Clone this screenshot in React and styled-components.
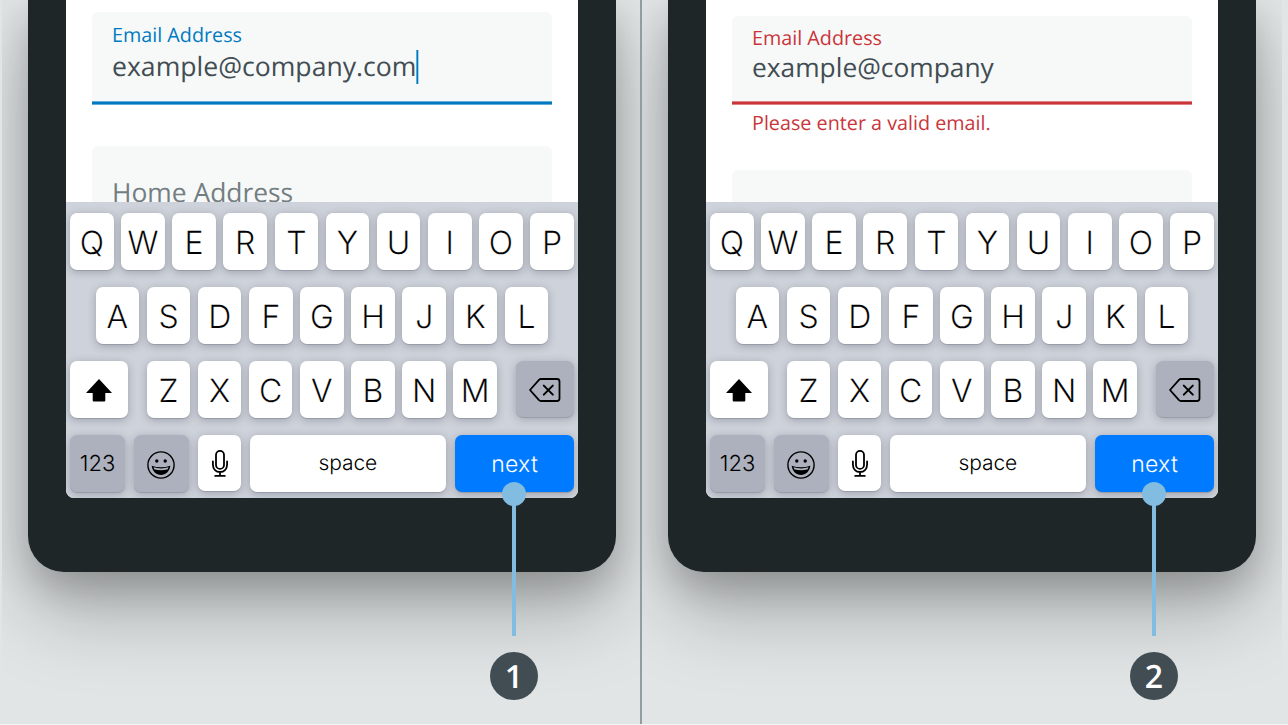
import React from "react";
import styled, { createGlobalStyle, css } from "styled-components";

const GlobalStyle = createGlobalStyle`
  *, *::before, *::after { box-sizing: border-box; }
  html, body { margin: 0; height: 100%; background: #e1e5e5; }
  body { overflow: hidden; font-family: "Open Sans", "Noto Sans", sans-serif; text-rendering: geometricPrecision; }
`;

const Page = styled.main`
  display: flex;
  width: 1288px;
  height: 725px;
  padding-left: 2px;
  background: #e1e5e5;
  border-bottom: 1px solid #f3f5f5;
`;

const Panel = styled.section`
  position: relative;
  flex: none;
  width: 640px;
  height: 724px;
  padding-left: 26px;
  overflow: hidden;
  border-right: ${(p) => (p.$divided ? "2px solid #929da2" : "none")};
`;

const Phone = styled.div`
  width: 588px;
  height: 572px;
  padding: 0 38px 74px;
  background: #1f2628;
  border-radius: 0 0 36px 36px;
  box-shadow: 0 40px 80px rgba(0, 0, 0, 0.25), 0 16px 36px rgba(0, 0, 0, 0.18);
`;

const Screen = styled.div`
  display: flex;
  flex-direction: column;
  height: 498px;
  overflow: hidden;
  background: #fff;
  border-radius: 0 0 8px 8px;
`;

const Form = styled.div`
  flex: none;
  height: 202px;
  padding: ${(p) => p.$top}px 26px 0;
  overflow: hidden;
`;

const Field = styled.div`
  height: ${(p) => p.$height}px;
  margin-top: ${(p) => p.$space || 0}px;
  padding: ${(p) => p.$pad}px 20px 0;
  border-radius: 6px 6px 0 0;
  background: #f7f9f8;
  color: ${(p) => p.$tone};
  ${(p) =>
    p.$underlined &&
    css`
      background: linear-gradient(currentColor, currentColor) 0 calc(100% - 1px) / 100% 2px no-repeat,
        linear-gradient(color-mix(in srgb, currentColor 62%, #fff), color-mix(in srgb, currentColor 62%, #fff)) 0 100% /
          100% 4px no-repeat,
        #f7f9f8;
    `}
`;

const Label = styled.div`
  font-size: 19.75px;
  line-height: 26px;
  white-space: nowrap;
`;

const Value = styled.div`
  display: flex;
  align-items: center;
  height: 34px;
  margin-top: ${(p) => p.$gap}px;
  color: #424d53;
  font-size: ${(p) => p.$size}px;
  line-height: 34px;
  white-space: nowrap;
`;

const Text = styled.span`
  position: relative;
  top: -1px;
`;

const Caret = styled.span`
  width: 3px;
  height: 34px;
  margin-left: -0.6px;
  background: linear-gradient(90deg, #5aaad8 1px, #0079c1 1px 2px, #a9d4ea 2px);
`;

const Placeholder = styled.div`
  color: #737e83;
  font-size: 26.4px;
  line-height: 34px;
  white-space: nowrap;
`;

const ErrorText = styled.div`
  height: 65px;
  padding: 5px 20px 0;
  color: #ca353b;
  font-size: 19.75px;
  line-height: 26px;
  white-space: nowrap;
`;

const Keyboard = styled.div`
  display: flex;
  flex: 1;
  flex-direction: column;
  gap: 16px;
  padding: 11px 4px 0;
  background: #ced2da;
`;

const KeyRow = styled.div`
  display: flex;
  height: 58px;
  gap: ${(p) => p.$gap || 7.6}px;
  padding-left: ${(p) => p.$indent || 0}px;
`;

const Key = styled.div`
  display: flex;
  flex: none;
  align-items: center;
  justify-content: center;
  width: ${(p) => p.$width || 43.56}px;
  height: ${(p) => p.$height || 57.3}px;
  margin-left: ${(p) => p.$before || 0}px;
  margin-right: ${(p) => p.$after || 0}px;
  border-radius: 7px;
  background: ${(p) => (p.$kind === "muted" ? "#adb1bd" : p.$kind === "primary" ? "#007aff" : "#fff")};
  color: ${(p) => (p.$kind === "primary" ? "#fff" : "#000")};
  box-shadow: 0 1px 0 rgba(120, 125, 140, 0.4), 0 2px 8px rgba(50, 55, 75, 0.32);
  font-family: Inter, "Liberation Sans", sans-serif;
  font-size: ${(p) => p.$size || 32}px;
  font-weight: ${(p) => (p.$size ? 350 : 300)};
  -webkit-text-stroke: ${(p) => (p.$size ? "0" : "0.15px #fff")};
  letter-spacing: ${(p) => p.$track || 0}px;
  line-height: 40px;
  padding-top: ${(p) => p.$drop ?? 2}px;
`;

const Callout = styled.div`
  position: absolute;
  top: 482px;
  left: 488px;
  display: flex;
  flex-direction: column;
  align-items: center;
  width: 48px;
`;

const Dot = styled.span`
  width: 24px;
  height: 24px;
  border-radius: 50%;
  background: #82bce0;
`;

const Stem = styled.span`
  width: 4px;
  height: 131px;
  margin-top: -1px;
  background: #82bce0;
`;

const Badge = styled.span`
  display: flex;
  align-items: center;
  justify-content: center;
  width: 48px;
  height: 48px;
  margin-top: 16px;
  padding-top: 2px;
  border-radius: 50%;
  background: #424d53;
  color: #fff;
  font-size: 32px;
  font-weight: 600;
  line-height: 46px;
`;

const ShiftIcon = () => (
  <svg width="26" height="23" viewBox="0 0 26 23">
    <path d="M13 0 26 14H19.3V21.5Q19.3 22.6 18.2 22.6H7.8Q6.7 22.6 6.7 21.5V14H0Z" />
  </svg>
);

const DeleteIcon = () => (
  <svg width="32" height="24" viewBox="0 0 32 24" fill="none" stroke="#000" strokeWidth="1.8" strokeLinecap="round" strokeLinejoin="round">
    <path d="M11.8 1H28Q30.5 1 30.5 3.5V20.5Q30.5 23 28 23H11.8Q10.8 23 10 22.2L1 12L10 1.8Q10.8 1 11.8 1Z" />
    <path d="m14.8 7.6 9 9m0-9-9 9" strokeWidth="2" />
  </svg>
);

const EmojiIcon = () => (
  <svg width="28" height="28" viewBox="0 0 28 28">
    <circle cx="14" cy="14" r="13.1" fill="none" stroke="#000" strokeWidth="1.4" />
    <circle cx="9.8" cy="10" r="1.7" />
    <circle cx="18.2" cy="10" r="1.7" />
    <path d="M4.7 14.8Q14 17.8 23.3 14.8C22.8 20.2 18.8 24 14 24S5.2 20.2 4.7 14.8Z" />
    <path d="M6.5 16.3Q14 18.5 21.5 16.3L20.8 18.2Q14 20.4 7.2 18.2Z" fill="#adb1bd" />
  </svg>
);

const MicIcon = () => (
  <svg width="16" height="27" viewBox="0 0 16 27" fill="none" stroke="#000" strokeWidth="1.8" strokeLinecap="round">
    <rect x="4" y=".9" width="8" height="18" rx="4" />
    <path d="M.9 11.5V14.5C.9 19.2 4 22 8 22S15.1 19.2 15.1 14.5V11.5M8 22V25.7M3.2 25.9H12.8" />
  </svg>
);

const letters = (text) => text.split("").map((c) => <Key key={c}>{c}</Key>);

const KeyboardPad = () => (
  <Keyboard>
    <KeyRow>{letters("QWERTYUIOP")}</KeyRow>
    <KeyRow $indent={25.6}>{letters("ASDFGHJKL")}</KeyRow>
    <KeyRow>
      <Key $width={57.6} $after={11.4}>
        <ShiftIcon />
      </Key>
      {letters("ZXCVBNM")}
      <Key $width={58} $height={56} $kind="muted" $before={11}>
        <DeleteIcon />
      </Key>
    </KeyRow>
    <KeyRow $gap={8.8}>
      <Key $width={55} $kind="muted" $size={22} $drop={0}>123</Key>
      <Key $width={55.4} $kind="muted" $drop={3}>
        <EmojiIcon />
      </Key>
      <Key $width={42.4} $height={56} $before={0.5} $drop={0}>
        <MicIcon />
      </Key>
      <Key $width={196.4} $size={21} $drop={0} $track={-0.1}>space</Key>
      <Key $width={119} $kind="primary" $size={23} $track={0.3} $before={0.3} $drop={0}>next</Key>
    </KeyRow>
  </Keyboard>
);

const Step = ({ number, divided, top, children }) => (
  <Panel $divided={divided}>
    <Phone>
      <Screen>
        <Form $top={top}>{children}</Form>
        <KeyboardPad />
      </Screen>
    </Phone>
    <Callout>
      <Dot />
      <Stem />
      <Badge>{number}</Badge>
    </Callout>
  </Panel>
);

export default function App() {
  return (
    <>
      <GlobalStyle />
      <Page>
        <Step number={1} divided top={12}>
          <Field $height={93} $pad={10} $tone="#0079c1" $underlined>
            <Label>Email Address</Label>
            <Value $gap={2} $size={26.6}>
              <Text>example@company.com</Text>
              <Caret />
            </Value>
          </Field>
          <Field $height={100} $pad={29} $space={41}>
            <Placeholder>Home Address</Placeholder>
          </Field>
        </Step>
        <Step number={2} top={16}>
          <Field $height={89} $pad={9} $tone="#ca353b" $underlined>
            <Label>Email Address</Label>
            <Value $gap={0} $size={26.35}>
              <Text>example@company</Text>
            </Value>
          </Field>
          <ErrorText>Please enter a valid email.</ErrorText>
          <Field $height={100} $pad={29} />
        </Step>
      </Page>
    </>
  );
}
